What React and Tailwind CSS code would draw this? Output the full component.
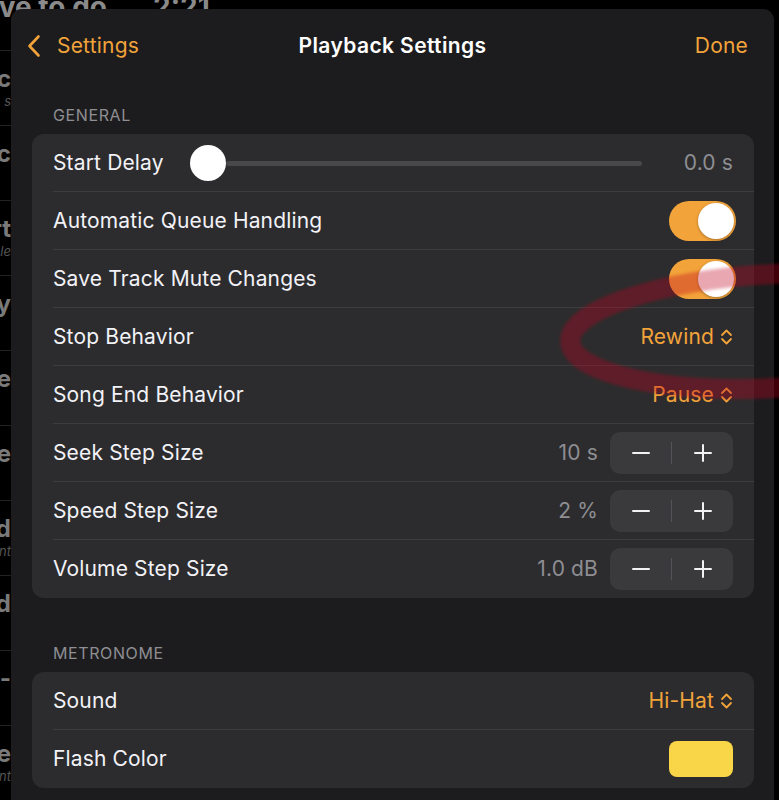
import React from 'react';

const ORANGE = '#f2a33a';
const FONT = { fontFamily: 'Inter, "Noto Sans", "Liberation Sans", sans-serif' };

// rows of the list that sits behind the sheet; only the last letters peek out
const BEHIND = [
  { title: 'Toc', sub: 's' },
  { title: 'Loc', sub: '' },
  { title: 'Start', sub: 'le' },
  { title: 'Joy', sub: '' },
  { title: 'Candle', sub: '' },
  { title: 'Whole', sub: '' },
  { title: 'Stand', sub: 'Ant' },
  { title: 'Hand', sub: '' },
  { title: 'One-', sub: '' },
  { title: 'Wonde', sub: 'Ant' },
];

function UpDown() {
  return (
    <svg width="13" height="18" viewBox="0 0 13 18" fill="none" className="ml-[6px]">
      <path d="M2 7 L6.5 2.5 L11 7" stroke={ORANGE} strokeWidth="1.8" strokeLinecap="round" strokeLinejoin="round" />
      <path d="M2 11 L6.5 15.5 L11 11" stroke={ORANGE} strokeWidth="1.8" strokeLinecap="round" strokeLinejoin="round" />
    </svg>
  );
}

function Toggle() {
  return (
    <div className="-mr-[3px] flex h-[40px] w-[67px] items-center justify-end rounded-full bg-[#f2a33a] px-[2px]">
      <div className="h-[36px] w-[36px] rounded-full bg-white shadow-[0_1px_3px_rgba(0,0,0,0.3)]" />
    </div>
  );
}

function Stepper() {
  return (
    <div className="ml-[12px] flex h-[42px] w-[123px] items-center rounded-[10px] bg-[#3a3a3c]">
      <div className="flex flex-1 items-center justify-center">
        <svg width="20" height="20" viewBox="0 0 20 20">
          <path d="M2 10 H18" stroke="#f2f2f2" strokeWidth="2" strokeLinecap="round" />
        </svg>
      </div>
      <div className="h-[22px] w-px bg-[#545458]" />
      <div className="flex flex-1 items-center justify-center">
        <svg width="20" height="20" viewBox="0 0 20 20">
          <path d="M2 10 H18 M10 2 V18" stroke="#f2f2f2" strokeWidth="2" strokeLinecap="round" />
        </svg>
      </div>
    </div>
  );
}

function Row({ label, last, children }) {
  return (
    <div className="pl-[21px]">
      <div
        className={
          'flex h-[58px] items-center pr-[21px] ' + (last ? '' : 'border-b border-[#3d3d40]')
        }
      >
        <span className="text-[21px] tracking-[0.15px] text-[#f2f2f7]">{label}</span>
        <div className="ml-auto flex items-center">{children}</div>
      </div>
    </div>
  );
}

const Value = ({ children }) => <span className="text-[21px] tracking-[0.15px] text-[#8e8e93]">{children}</span>;
const Pick = ({ children }) => (
  <span className="flex items-center text-[21px] tracking-[0.15px] text-[#f2a33a]">
    {children}
    <UpDown />
  </span>
);

export default function App() {
  return (
    <div className="relative h-[800px] w-[779px] overflow-hidden bg-black" style={FONT}>
      {/* app underneath the sheet */}
      <div className="-mt-[14px] flex items-center gap-[18px] text-[28px] font-bold text-[#8a8a8a]">
        <span className="-ml-[17px] whitespace-nowrap">ave to do...</span>
        <span>2:21</span>
      </div>
      <div className="mt-[22px] w-[11px] overflow-hidden border-t border-[#222]">
        {BEHIND.map((r, i) => (
          <div key={i} className="flex h-[75px] flex-col items-end justify-center border-b border-[#222] pb-[2px]">
            <span className="whitespace-nowrap text-[24px] font-bold leading-[28px] text-[#7a7a7a]">{r.title}</span>
            <span className="h-[16px] whitespace-nowrap text-[13px] italic leading-[16px] text-[#555]">{r.sub}</span>
          </div>
        ))}
      </div>

      {/* sheet */}
      <div className="absolute left-[11px] right-[5px] top-[9px] h-[820px] rounded-[11px] bg-[#1c1c1e]">
        <div className="flex h-[74px] items-center px-[16px]">
          <div className="flex w-[200px] items-center text-[21px] tracking-[0.2px] text-[#f2a33a]">
            <svg width="14" height="24" viewBox="0 0 14 24" fill="none">
              <path d="M11.5 2.5 L2.5 12 L11.5 21.5" stroke={ORANGE} strokeWidth="2.6" strokeLinecap="round" strokeLinejoin="round" />
            </svg>
            <span className="ml-[16px]">Settings</span>
          </div>
          <div className="flex-1 text-center text-[21px] font-semibold tracking-[0.4px] text-white">Playback Settings</div>
          <div className="flex w-[200px] justify-end pr-[10px] text-[21px] tracking-[0.2px] text-[#f2a33a]">Done</div>
        </div>

        <div className="mt-[22px] pl-[42px] text-[16px] leading-[20px] tracking-[0.6px] text-[#8e8e93]">GENERAL</div>
        <div className="ml-[21px] mr-[20px] mt-[9px] rounded-[12px] bg-[#2c2c2e]">
          <Row label="Start Delay">
            <span />
          </Row>
          <Row label="Automatic Queue Handling">
            <Toggle />
          </Row>
          <Row label="Save Track Mute Changes">
            <Toggle />
          </Row>
          <Row label="Stop Behavior">
            <Pick>Rewind</Pick>
          </Row>
          <Row label="Song End Behavior">
            <Pick>Pause</Pick>
          </Row>
          <Row label="Seek Step Size">
            <Value>10 s</Value>
            <Stepper />
          </Row>
          <Row label="Speed Step Size">
            <Value>2 %</Value>
            <Stepper />
          </Row>
          <Row label="Volume Step Size" last>
            <Value>1.0 dB</Value>
            <Stepper />
          </Row>
        </div>

        <div className="mt-[45px] pl-[42px] text-[16px] leading-[20px] tracking-[0.6px] text-[#8e8e93]">METRONOME</div>
        <div className="ml-[21px] mr-[20px] mt-[9px] rounded-[12px] bg-[#2c2c2e]">
          <Row label="Sound">
            <Pick>Hi-Hat</Pick>
          </Row>
          <Row label="Flash Color" last>
            <div className="h-[36px] w-[64px] rounded-[8px] bg-[#f9d548]" />
          </Row>
        </div>
      </div>

      {/* start delay slider, drawn over its row */}
      <div className="absolute left-[190px] top-[145px] flex h-[36px] w-[543px] items-center">
        <div className="h-[36px] w-[36px] shrink-0 rounded-full bg-white" />
        <div className="h-[5px] w-[416px] rounded-full bg-[#48484a]" />
        <span className="ml-auto text-[21px] tracking-[0.15px] text-[#8e8e93]">0.0 s</span>
      </div>

      {/* red annotation circle */}
      <svg className="pointer-events-none absolute inset-0" width="779" height="800">
        <defs>
          <filter id="soft">
            <feGaussianBlur stdDeviation="1.5" />
          </filter>
        </defs>
        <ellipse
          cx="775"
          cy="331"
          rx="205"
          ry="57"
          transform="rotate(-3 775 331)"
          fill="none"
          stroke="rgba(190,15,30,0.34)"
          strokeWidth="20"
          filter="url(#soft)"
        />
      </svg>
    </div>
  );
}
